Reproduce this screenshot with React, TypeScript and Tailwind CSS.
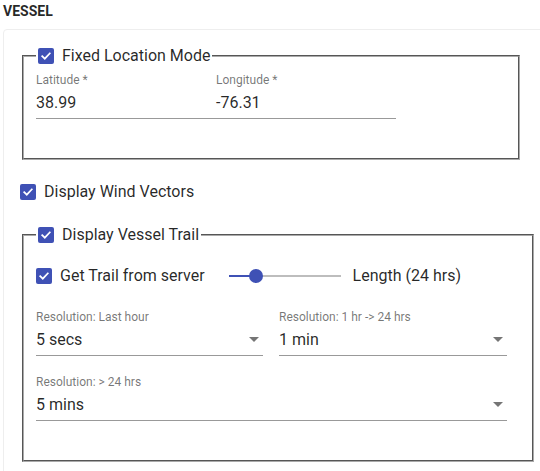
import React from "react";

function Check() {
  return (
    <span className="flex h-4 w-4 shrink-0 items-center justify-center rounded-[2px] bg-[#3f51b5]">
      <svg width="12" height="12" viewBox="0 0 12 12" fill="none">
        <path d="M2.2 6.2 L4.8 8.7 L9.8 3.4" stroke="#fff" strokeWidth="1.7" strokeLinecap="square" />
      </svg>
    </span>
  );
}

function Arrow() {
  return (
    <svg width="10" height="5" viewBox="0 0 10 5" className="absolute right-1 top-[27px]">
      <path d="M0 0 L10 0 L5 5 Z" fill="rgba(0,0,0,0.54)" />
    </svg>
  );
}

function Field({ label, value, className, select }: { label: string; value: string; className: string; select?: boolean }) {
  return (
    <div className={`relative ${className}`}>
      <div className="text-[12px] leading-[14px] text-black/55">{label}</div>
      <div className="mt-[6px] border-b border-black/40 pb-[6px] text-[16px] leading-[19px] text-black/85">{value}</div>
      {select && <Arrow />}
    </div>
  );
}

export default function App() {
  return (
    <div className="h-[471px] w-[540px] overflow-hidden bg-white font-['Roboto',sans-serif] text-black/85">
      <div className="pl-[3px] pt-[4px] text-[14px] font-bold leading-[15px] text-black/85">VESSEL</div>

      <div className="ml-[3px] mt-[10px] w-[600px] rounded-[4px] border border-[#eeeeee] pl-[16px] pt-[17px] pb-10">
        {/* fixed location */}
        <fieldset className="ml-[2px] w-[498px] border-2 border-[#aaaaaa] pl-3 pb-[39px] [border-style:groove]">
          <legend className="flex h-[18px] items-center gap-2 px-[2px] text-[16px] leading-[18px]">
            <Check />
            <span>Fixed Location Mode</span>
          </legend>
          <div className="flex pt-2">
            <Field label="Latitude *" value="38.99" className="w-[180px]" />
            <Field label="Longitude *" value="-76.31" className="w-[180px]" />
          </div>
        </fieldset>

        <div className="mt-[20px] flex h-6 items-center gap-2 text-[16px]">
          <Check />
          <span>Display Wind Vectors</span>
        </div>

        {/* vessel trail */}
        <fieldset className="ml-[2px] mt-[22px] w-[512px] border-2 border-[#aaaaaa] pl-3 pr-6 pb-[39px] [border-style:groove]">
          <legend className="flex h-[18px] items-center gap-2 px-[2px] text-[16px] leading-[18px]">
            <Check />
            <span>Display Vessel Trail</span>
          </legend>

          <div className="mt-[20px] flex h-6 items-center text-[16px]">
            <Check />
            <span className="ml-2">Get Trail from server</span>
            <div className="relative ml-6 flex h-[14px] w-[112px] items-center">
              <div className="h-[2px] w-[27px] bg-[#3f51b5]" />
              <div className="h-[2px] flex-1 bg-[#bdbdbd]" />
              <div className="absolute left-[20px] h-[14px] w-[14px] rounded-full bg-[#3f51b5]" />
            </div>
            <span className="ml-[12px]">Length (24 hrs)</span>
          </div>

          <div className="mt-[22px] flex gap-4">
            <Field label="Resolution: Last hour" value="5 secs" className="w-[227px]" select />
            <Field label="Resolution: 1 hr -> 24 hrs" value="1 min" className="w-[228px]" select />
          </div>

          <div className="mt-[19px]">
            <Field label="Resolution: > 24 hrs" value="5 mins" className="w-[471px]" select />
          </div>
        </fieldset>
      </div>
    </div>
  );
}
